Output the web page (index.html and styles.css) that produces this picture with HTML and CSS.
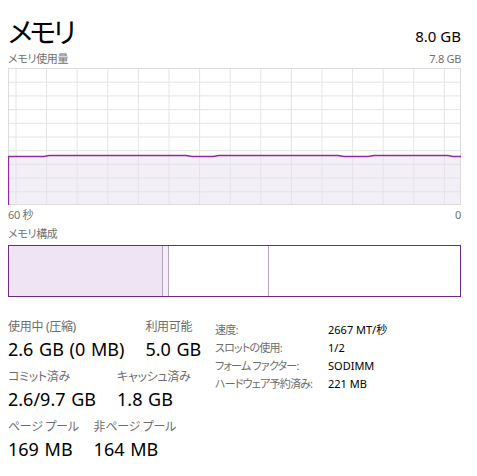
FILE: index.html
```html
<!DOCTYPE html>
<html lang="ja">
<head>
    <meta charset="UTF-8">
    <title>メモリ</title>
    <link rel="stylesheet" href="styles.css">
</head>
<body>
    <div class="panel">
        <header class="head">
            <h1 class="title">メモリ</h1>
            <span class="total">8.0 GB</span>
        </header>
        <div class="caption">
            <span>メモリ使用量</span>
            <span>7.8 GB</span>
        </div>
        <svg class="graph" width="453" height="137" viewBox="0 0 453 137">
            <path class="fill" d="M0 137 V88.5 H36 L41 87.5 H178 L184 88.5 H205 L211 87.5 H330 L336 88.5 H360 L366 87.5 H440 L445 88.5 H453 V137 Z"/>
            <g class="grid">
                <line x1="8" y1="0" x2="8" y2="137"/>
                <line x1="38.6" y1="0" x2="38.6" y2="137"/>
                <line x1="69.2" y1="0" x2="69.2" y2="137"/>
                <line x1="99.8" y1="0" x2="99.8" y2="137"/>
                <line x1="130.4" y1="0" x2="130.4" y2="137"/>
                <line x1="161" y1="0" x2="161" y2="137"/>
                <line x1="191.6" y1="0" x2="191.6" y2="137"/>
                <line x1="222.2" y1="0" x2="222.2" y2="137"/>
                <line x1="252.8" y1="0" x2="252.8" y2="137"/>
                <line x1="283.4" y1="0" x2="283.4" y2="137"/>
                <line x1="314" y1="0" x2="314" y2="137"/>
                <line x1="344.6" y1="0" x2="344.6" y2="137"/>
                <line x1="375.2" y1="0" x2="375.2" y2="137"/>
                <line x1="405.8" y1="0" x2="405.8" y2="137"/>
                <line x1="436.4" y1="0" x2="436.4" y2="137"/>
                <line x1="0" y1="14.2" x2="453" y2="14.2"/>
                <line x1="0" y1="27.9" x2="453" y2="27.9"/>
                <line x1="0" y1="41.6" x2="453" y2="41.6"/>
                <line x1="0" y1="55.3" x2="453" y2="55.3"/>
                <line x1="0" y1="69" x2="453" y2="69"/>
                <line x1="0" y1="82.7" x2="453" y2="82.7"/>
                <line x1="0" y1="96.4" x2="453" y2="96.4"/>
                <line x1="0" y1="110.1" x2="453" y2="110.1"/>
                <line x1="0" y1="123.8" x2="453" y2="123.8"/>
            </g>
            <rect class="frame" x="0.5" y="0.5" width="452" height="136"/>
            <path class="usage" d="M0.5 137 V88.5 H36 L41 87.5 H178 L184 88.5 H205 L211 87.5 H330 L336 88.5 H360 L366 87.5 H440 L445 88.5 H453"/>
        </svg>
        <div class="caption axis">
            <span>60 秒</span>
            <span>0</span>
        </div>
        <div class="caption">
            <span>メモリ構成</span>
        </div>
        <div class="compose">
            <div class="seg inuse"></div>
            <div class="seg modified"></div>
            <div class="seg standby"></div>
            <div class="seg free"></div>
        </div>

        <div class="stats">
            <div class="figures">
                <div class="row">
                    <div class="item">
                        <div class="label">使用中 (圧縮)</div>
                        <div class="value">2.6 GB (0 MB)</div>
                    </div>
                    <div class="item">
                        <div class="label">利用可能</div>
                        <div class="value">5.0 GB</div>
                    </div>
                </div>
                <div class="row">
                    <div class="item">
                        <div class="label">コミット済み</div>
                        <div class="value">2.6/9.7 GB</div>
                    </div>
                    <div class="item">
                        <div class="label">キャッシュ済み</div>
                        <div class="value">1.8 GB</div>
                    </div>
                </div>
                <div class="row">
                    <div class="item">
                        <div class="label">ページ プール</div>
                        <div class="value">169 MB</div>
                    </div>
                    <div class="item">
                        <div class="label">非ページ プール</div>
                        <div class="value">164 MB</div>
                    </div>
                </div>
            </div>
            <dl class="specs">
                <dt>速度:</dt><dd>2667 MT/秒</dd>
                <dt>スロットの使用:</dt><dd>1/2</dd>
                <dt>フォーム ファクター:</dt><dd>SODIMM</dd>
                <dt>ハードウェア予約済み:</dt><dd>221 MB</dd>
            </dl>
        </div>
    </div>
</body>
</html>
```

FILE: styles.css
```css
body {
    margin: 0;
    padding: 0;
    background-color: #fff;
    font-family: "Noto Sans", "Noto Sans CJK JP", sans-serif;
    font-feature-settings: "palt";
    color: #000;
}

.panel {
    width: 453px;
    padding: 10px 8px 0 8px;
}

.head {
    display: flex;
    justify-content: space-between;
    align-items: flex-end;
    height: 40px;
}

.title {
    margin: 0;
    font-family: "Noto Sans CJK JP", sans-serif;
    font-size: 28px;
    font-weight: 400;
    line-height: 38px;
    letter-spacing: -3px;
}

.total {
    font-size: 15px;
    line-height: 20px;
    margin-bottom: 4px;
}

.caption {
    display: flex;
    justify-content: space-between;
    font-size: 11px;
    line-height: 18px;
    color: #707070;
    letter-spacing: -0.3px;
}

.axis {
    line-height: 20px;
}

.graph {
    display: block;
}

.graph .fill {
    fill: #f3eff6;
}

.graph .grid line {
    stroke: #e4e4e4;
    stroke-width: 1;
}

.graph .frame {
    fill: none;
    stroke: #dcdcdc;
}

.graph .usage {
    fill: none;
    stroke: #8b2ca0;
    stroke-width: 1.3;
}

.compose {
    display: flex;
    height: 50px;
    margin-top: 2px;
    border: 1px solid #6e2a86;
}

.seg {
    height: 100%;
}

.inuse {
    width: 153px;
    background-color: #efe4f3;
    border-right: 1px solid #b6a4bc;
}

.modified {
    width: 5px;
    background-color: #f3ebf5;
    border-right: 1px solid #b6a4bc;
}

.standby {
    width: 99px;
    border-right: 1px solid #b6a4bc;
}

.free {
    flex: 1;
}

.stats {
    display: flex;
    align-items: flex-start;
    margin-top: 22px;
}

.figures {
    width: 207px;
}

.row {
    display: flex;
    gap: 21px;
    margin-bottom: 6px;
}

/* labels do not widen their column, only the value does */
.label {
    width: 0;
    white-space: nowrap;
    font-size: 12px;
    line-height: 16px;
    color: #6d6d6d;
    letter-spacing: -0.3px;
}

.value {
    font-size: 18px;
    line-height: 28px;
    word-spacing: 1px;
}

.specs {
    display: grid;
    grid-template-columns: 113px auto;
    margin: 2px 0 0 0;
    font-size: 11px;
    line-height: 18px;
}

.specs dt {
    color: #6d6d6d;
    letter-spacing: -0.8px;
}

.specs dd {
    margin: 0;
}
```
